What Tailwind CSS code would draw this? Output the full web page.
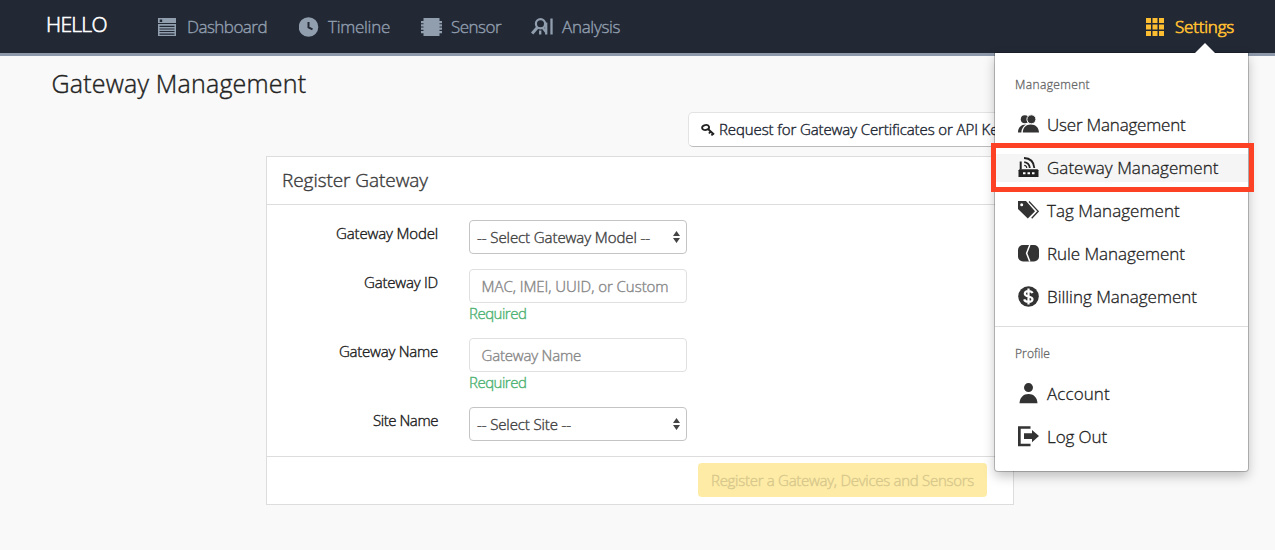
<!DOCTYPE html>
<html lang="en">
<head>
<meta charset="utf-8">
<title>Gateway Management</title>
<script src="https://cdn.jsdelivr.net/npm/@tailwindcss/browser@4"></script>
</head>
<body class="h-[550px] overflow-hidden bg-[#f9f9f9] font-['Open_Sans','Noto_Sans',sans-serif] font-light text-[#222] whitespace-nowrap [-webkit-text-stroke:0.4px_currentColor]">

<header class="relative flex h-14 border-b-3 border-[#8d99aa] bg-[#222834] pl-[46px] text-[17px] leading-[53px] text-[#919eae]">
  <a class="w-[111px] text-[21px] leading-[49px] tracking-[-0.7px] text-white [-webkit-text-stroke:0.6px_currentColor]">HELLO</a>
  <nav class="flex">
    <a class="flex w-[142px] items-center gap-[10px] tracking-[-0.53px]">
      <svg class="h-5 w-5" viewBox="0 0 20 20" fill="currentColor"><path fill-rule="evenodd" d="M1 1h18v5H1zM2.700 2.400v2.500h2.500V2.400zM1 7h18v12H1zM2.500 8.700v1.200h15V8.700zM2.500 11.500v1.100h15v-1.100zM2.500 14v1.100h15V14zM2.500 16.600v1.100h15v-1.100z"/></svg>
      Dashboard
    </a>
    <a class="flex w-[122px] items-center gap-[10px] tracking-[-0.27px]">
      <svg class="h-5 w-5" viewBox="0 0 20 20" fill="none"><circle cx="9.500" cy="10" r="9.800" fill="currentColor"/><path d="M9.500 5v5.400l4 1.900" stroke="#222834" stroke-width="2"/></svg>
      <span class="-ml-px">Timeline</span>
    </a>
    <a class="flex w-[110px] items-center gap-[9px] tracking-[-0.52px]">
      <svg class="h-5 w-[21px]" viewBox="0 0 21 20" fill="currentColor"><path d="M2.500 1h16v18h-16zM0 4h21v2.200H0zM0 7.300h21v2.200H0zM0 10.600h21v2.200H0zM0 14h21v2.300H0z"/></svg>
      Sensor
    </a>
    <a class="flex items-center gap-[9px] tracking-[-0.3px]">
      <svg class="h-5 w-[22px]" viewBox="0 0 22 20" fill="none" stroke="currentColor"><circle cx="9.500" cy="6.800" r="4.600" stroke-width="2.200"/><path d="M6.400 10.500l-5.300 6" stroke-width="3"/><path d="M9.200 13.500v4M15.200 5.500v12M20.500 1.500v16" stroke-width="2.300"/><path d="M11.500 10.500l3.500 4.500" stroke-width="2.400"/></svg>
      Analysis
    </a>
  </nav>
  <a class="mr-[41px] ml-auto flex items-center gap-[11px] tracking-[-0.2px] text-[#fdbe31] [-webkit-text-stroke:0.7px_currentColor]">
    <svg class="h-[18px] w-[18px]" viewBox="0 0 18 18" fill="currentColor"><path d="M0 0h5v5H0zM6.500 0h5v5h-5zM13 0h5v5h-5zM0 6.500h5v5H0zM6.500 6.500h5v5h-5zM13 6.500h5v5h-5zM0 13h5v5H0zM6.500 13h5v5h-5zM13 13h5v5h-5z"/></svg>
    Settings
  </a>

  <section class="absolute top-[53px] right-[27px] z-10 h-[418px] w-[253px] rounded-b-[3px] bg-white pt-[21px] text-[17px] text-[#222] shadow-[0_0_0_1px_rgba(0,0,0,0.22),0_5px_12px_rgba(0,0,0,0.25)] [-webkit-text-stroke:0.3px_currentColor]">
    <svg class="absolute -top-[10px] right-[33px] h-[10px] w-5" viewBox="0 0 20 10" fill="#fff"><path d="M0 10L10 0l10 10z"/></svg>
    <h2 class="h-[29px] pl-5 text-[12px] leading-[21px] tracking-[0.37px] text-[#666]">Management</h2>
    <ul class="leading-[43px]">
      <li class="flex h-[43px] items-center gap-[8px] pl-[23px] tracking-[-0.2px]">
        <svg class="h-[21px] w-[21px]" viewBox="0 0 21 21" fill="#333"><circle cx="6.800" cy="5.300" r="4"/><circle cx="13.400" cy="5.300" r="4.500" stroke="#fff" stroke-width="1"/><path d="M0 18.500c0-5 3-8 8-8-3 2-4.500 4.500-4.700 8zM4.800 18.500c.2-5 3-8 8-8s8 3 8.200 8z"/></svg>
        User Management
      </li>
      <li class="relative flex h-[43px] items-center">
        <div class="flex h-7 w-full items-center gap-[8px] bg-[#f5f5f5] pl-[23px] tracking-[0.04px]">
          <svg class="h-[21px] w-[21px]" viewBox="0 0 21 21" fill="none" stroke="#222"><path d="M1.500 12.300h18l1 1v6.700H.5v-6.700z" fill="#222" stroke="none"/><path d="M2.700 4.500v8" stroke-width="2"/><path d="M6.200 5.200c3.500.4 5.300 2.500 5.600 5.800M6 1c6 .2 9.800 4 10.300 10" stroke-width="1.800"/><path d="M6.200 8.300a2.500 2.500 0 0 1 2.500 2.700" stroke-width="1.200"/><path d="M5 16.300h2.500M9.500 16.300H12M14 16.300h2.500" stroke="#fff" stroke-width="2"/></svg>
          Gateway Management
        </div>
        <div class="absolute -top-[3px] -left-[4px] h-[49px] w-[263px] border-5 border-[#fd4124]"></div>
      </li>
      <li class="flex h-[43px] items-center gap-[8px] pl-[23px] tracking-[0.04px]">
        <svg class="h-[21px] w-[21px]" viewBox="0 0 21 21"><path fill="#333" fill-rule="evenodd" d="M0 1h8l9 10.300-7.200 7.200L0 9zM3.700 3.300a1.500 1.500 0 100 3 1.500 1.500 0 000-3z"/><path d="M11 1.500l9.200 9.800-6.500 7" fill="none" stroke="#333" stroke-width="1.300"/></svg>
        Tag Management
      </li>
      <li class="flex h-[43px] items-center gap-[8px] pl-[23px] tracking-[-0.06px]">
        <svg class="h-[21px] w-[21px]" viewBox="0 0 21 21"><rect y="2" width="21" height="16.500" rx="5" fill="#333"/><path d="M11.800 2L8.600 10.200l3.200 8.300" fill="none" stroke="#fff" stroke-width="1.500"/></svg>
        Rule Management
      </li>
      <li class="flex h-[43px] items-center gap-[8px] pl-[23px] tracking-[-0.02px]">
        <svg class="h-[21px] w-[21px]" viewBox="0 0 21 21" fill="none" stroke="#fff"><circle cx="10.500" cy="10.500" r="10.300" fill="#333" stroke="none"/><path d="M14.500 7.200C13.800 5.500 12.500 5 10.500 5 8 5 6.800 6.200 6.800 7.700c0 3.800 7.700 1.800 7.700 5.500 0 1.500-1.500 2.600-4 2.600-2.200 0-3.700-.7-4.400-2.500M10.500 2.500v16" stroke-width="2.200"/></svg>
        Billing Management
      </li>
    </ul>
    <div class="mt-[8px] border-t border-[#ddd] pt-[16px]">
      <h2 class="h-[29px] pl-5 text-[12px] leading-[21px] tracking-[0.1px] text-[#666]">Profile</h2>
      <ul class="leading-[43px]">
        <li class="flex h-[43px] items-center gap-[8px] pl-[23px] tracking-[0.1px]">
          <svg class="h-[21px] w-[21px]" viewBox="0 0 21 21" fill="#333"><circle cx="10.500" cy="4.600" r="4.500"/><path d="M1.500 20.200c.3-6 4-9.300 9-9.300s8.700 3.300 9 9.300z"/></svg>
          Account
        </li>
        <li class="flex h-[43px] items-center gap-[8px] pl-[23px] tracking-[-0.09px]">
          <svg class="h-[21px] w-[21px]" viewBox="0 0 21 21" fill="#333"><path d="M0 .2h12.500v2.500H2.700v15h9.800v2.500H0zM6 7.200h8V3.900l7 6.200-7 6.100V13H6z"/></svg>
          Log Out
        </li>
      </ul>
    </div>
  </section>
</header>

<main>
  <h1 class="h-14 pl-[51.500px] text-[25px] leading-[55px] tracking-[0.2px]">Gateway Management</h1>
  <div class="ml-[266px] w-[748px]">
    <div class="flex h-11 justify-end">
      <button class="flex h-[35px] w-[326px] items-center gap-[4px] rounded-[5px] border border-[#e3e3e3] border-b-[#bbb] bg-white pl-[12px] text-[15px] leading-[31px] tracking-[-0.1px] text-[#222834]">
        <svg class="h-[14px] w-[14px]" viewBox="0 0 14 14" fill="none" stroke="#222"><ellipse cx="4.600" cy="4.500" rx="3.500" ry="2.500" transform="rotate(-12 4.600 4.500)" stroke-width="1.800"/><path d="M7 6l6 5.500M9.500 8.500L8 10.500M12 10.500l-1.500 2" stroke-width="1.900"/></svg>
        Request for Gateway Certificates or API Key
      </button>
    </div>
    <section class="h-[349px] border border-[#ddd] bg-white text-[15px]">
      <h2 class="h-12 border-b border-[#ddd] pl-[15px] text-[19px] leading-[47px] tracking-[-0.06px] text-[#3c3c3c]">Register Gateway</h2>
      <form class="h-[252px] border-b border-[#ddd] pt-[15px]">
        <div class="flex h-[49px] gap-[31px]">
          <label class="w-[171px] text-right leading-[27px] tracking-[-0.15px]">Gateway Model</label>
          <div class="flex h-[34px] w-[218px] items-center justify-between rounded-[4px] border border-[#c4c4c4] pr-[6px] pl-[7px] tracking-[-0.08px] text-[#444]">-- Select Gateway Model --
            <svg class="h-3 w-[7px]" viewBox="0 0 7 12" fill="#444"><path d="M0 5l3.500-5L7 5zM0 7h7l-3.500 5z"/></svg>
          </div>
        </div>
        <div class="flex h-[69px] gap-[31px]">
          <label class="w-[171px] text-right leading-[27px] tracking-[-0.2px]">Gateway ID</label>
          <div>
            <div class="h-[34px] w-[218px] rounded-[4px] border border-[#e0e0e0] pl-[11.500px] leading-[33px] tracking-[-0.04px] text-[#888]">MAC, IMEI, UUID, or Custom</div>
            <p class="leading-5 tracking-[-0.5px] text-[#4fb374]">Required</p>
          </div>
        </div>
        <div class="flex h-[69px] gap-[31px]">
          <label class="w-[171px] text-right leading-[27px] tracking-[-0.24px]">Gateway Name</label>
          <div>
            <div class="h-[34px] w-[218px] rounded-[4px] border border-[#e0e0e0] pl-[11.500px] leading-[33px] tracking-[-0.2px] text-[#888]">Gateway Name</div>
            <p class="leading-5 tracking-[-0.5px] text-[#4fb374]">Required</p>
          </div>
        </div>
        <div class="flex gap-[31px]">
          <label class="w-[171px] text-right leading-[27px] tracking-[-0.44px]">Site Name</label>
          <div class="flex h-[34px] w-[218px] items-center justify-between rounded-[4px] border border-[#c4c4c4] pr-[6px] pl-[7px] tracking-[-0.12px] text-[#444]">-- Select Site --
            <svg class="h-3 w-[7px]" viewBox="0 0 7 12" fill="#444"><path d="M0 5l3.500-5L7 5zM0 7h7l-3.500 5z"/></svg>
          </div>
        </div>
      </form>
      <div class="flex justify-end pt-[6px] pr-[26px]">
        <button class="h-[34px] w-[289px] rounded-[4px] bg-[#feeca6] tracking-[-0.28px] text-[#d8c88c]">Register a Gateway, Devices and Sensors</button>
      </div>
    </section>
  </div>
</main>
</body>
</html>
